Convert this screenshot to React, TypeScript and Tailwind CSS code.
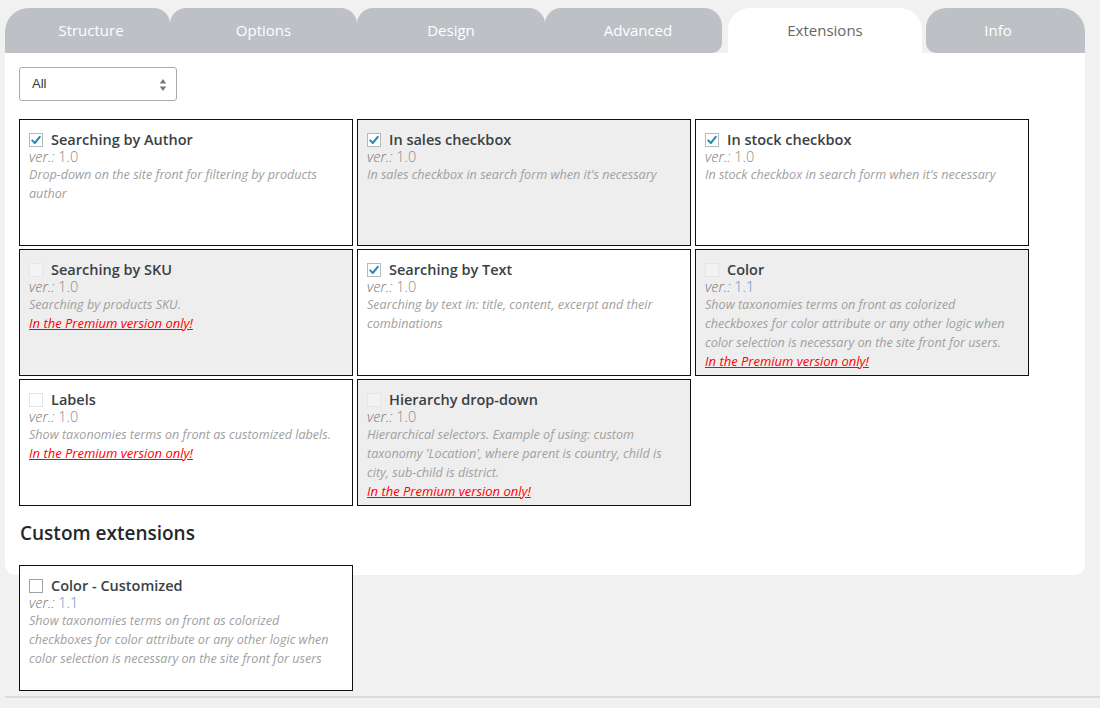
import React from "react";

type Ext = {
  title: string;
  ver: string;
  desc: string;
  checked?: boolean;
  premium?: boolean;
  gray?: boolean;
};

const exts: Ext[] = [
  { title: "Searching by Author", ver: "1.0", desc: "Drop-down on the site front for filtering by products author", checked: true },
  { title: "In sales checkbox", ver: "1.0", desc: "In sales checkbox in search form when it's necessary", checked: true, gray: true },
  { title: "In stock checkbox", ver: "1.0", desc: "In stock checkbox in search form when it's necessary", checked: true },
  { title: "Searching by SKU", ver: "1.0", desc: "Searching by products SKU.", premium: true, gray: true },
  { title: "Searching by Text", ver: "1.0", desc: "Searching by text in: title, content, excerpt and their combinations", checked: true },
  { title: "Color", ver: "1.1", desc: "Show taxonomies terms on front as colorized checkboxes for color attribute or any other logic when color selection is necessary on the site front for users.", premium: true, gray: true },
  { title: "Labels", ver: "1.0", desc: "Show taxonomies terms on front as customized labels.", premium: true },
  { title: "Hierarchy drop-down", ver: "1.0", desc: "Hierarchical selectors. Example of using: custom taxonomy 'Location', where parent is country, child is city, sub-child is district.", premium: true, gray: true },
];

const font = { fontFamily: '"Open Sans", "Noto Sans", sans-serif' };

function Check({ checked, premium, gray }: { checked?: boolean; premium?: boolean; gray?: boolean }) {
  if (premium) {
    return (
      <span
        className={
          "inline-block w-[14px] h-[14px] shrink-0 border " +
          (gray ? "bg-[#f3f3f3] border-[#e6e6e6]" : "bg-white border-[#e3e3e3]")
        }
      />
    );
  }
  return (
    <span className="relative inline-block w-[14px] h-[14px] shrink-0 border border-[#b4b9be] bg-white">
      {checked && (
        <svg viewBox="0 0 14 14" className="absolute left-[-1px] top-[-1px] w-[14px] h-[14px]">
          <path d="M3.2 7.4 L5.8 10 L10.8 3.8" fill="none" stroke="#1e8cbe" strokeWidth="2" strokeLinecap="round" strokeLinejoin="round" />
        </svg>
      )}
    </span>
  );
}

function Body({ title, ver, desc, premium, box }: { title: string; ver: string; desc: string; premium?: boolean; box: React.ReactNode }) {
  return (
    <>
      <div className="flex items-center gap-[8px] h-[21px]">
        {box}
        <span className="text-[14.5px] font-semibold text-[#3a3f44] leading-[21px]">{title}</span>
      </div>
      <div className="h-[15px] leading-[14px] text-[14.5px]">
        <span className="italic font-light text-[#777]">ver.:</span>{" "}
        <span className={"font-light " + (ver === "1.1" ? "text-[#5b95d0]" : "text-[#8a8a8a]")}>{ver}</span>
      </div>
      <div className="text-[12.6px] italic leading-[19px] text-[#a0a0a0]">{desc}</div>
      {premium && (
        <div className="text-[13px] italic leading-[19px] text-[#ff0000] underline">
          In the Premium version only!
        </div>
      )}
    </>
  );
}

function Card({ e }: { e: Ext }) {
  return (
    <div
      className={
        "h-[127px] border border-[#111] px-[9px] pt-[9px] " + (e.gray ? "bg-[#eeeeee]" : "bg-white")
      }
    >
      <Body
        title={e.title}
        ver={e.ver}
        desc={e.desc}
        premium={e.premium}
        box={<Check checked={e.checked} premium={e.premium} gray={e.gray} />}
      />
    </div>
  );
}

function Tab({ label, cls, active }: { label: string; cls: string; active?: boolean }) {
  return (
    <div
      className={
        "h-[45px] flex items-center justify-center text-[15px] " +
        (active ? "bg-white text-[#666]" : "bg-[#bdc1c6] text-white") +
        " " +
        cls
      }
    >
      {label}
    </div>
  );
}

export default function App() {
  return (
    <div className="min-h-[708px] bg-[#f1f1f1] pt-[8px]" style={font}>
      <div className="flex ml-[5px] w-[1080px]">
        <Tab label="Structure" cls="w-[165px] rounded-tl-[24px] rounded-tr-[16px] pl-[7px]" />
        <Tab label="Options" cls="w-[187px] rounded-t-[16px]" />
        <Tab label="Design" cls="w-[188px] rounded-t-[16px]" />
        <Tab label="Advanced" cls="w-[177px] rounded-tl-[16px] rounded-tr-[18px] rounded-br-[10px] pl-[9px]" />
        <Tab label="Extensions" active cls="w-[194px] ml-[6px] rounded-t-[22px]" />
        <Tab label="Info" cls="w-[159px] ml-[4px] rounded-tl-[20px] rounded-tr-[24px] rounded-bl-[10px] pr-[15px]" />
      </div>
      <div className="ml-[5px] w-[1080px] h-[522px] bg-white rounded-b-[10px] px-[14px] pt-[14px]">
        <div
          className="relative w-[158px] h-[34px] border border-[#a7aaad] rounded-[3px] bg-white flex items-center pl-[12px] text-[13px] text-[#32373c]"
          style={{ fontFamily: '"Liberation Sans", Arial, sans-serif' }}
        >
          All
          <svg viewBox="0 0 8 14" className="absolute right-[9px] top-[10px] w-[8px] h-[14px]">
            <path d="M4 1 L7.2 5.6 L0.8 5.6 Z" fill="#777" />
            <path d="M4 13 L7.2 8.4 L0.8 8.4 Z" fill="#777" />
          </svg>
        </div>
        <div className="mt-[18px] grid grid-cols-[334px_334px_334px] gap-x-[4px] gap-y-[3px]">
          {exts.map((e) => (
            <Card key={e.title} e={e} />
          ))}
        </div>
        <div className="mt-[14px] h-[26px] leading-[26px] text-[19px] font-semibold text-[#23282d] pl-[1px]">
          Custom extensions
        </div>
        <div className="mt-[19px] w-[334px]">
          <div className="h-[126px] border border-[#111] bg-white px-[9px] pt-[9px]">
            <Body
              title="Color - Customized"
              ver="1.1"
              desc="Show taxonomies terms on front as colorized checkboxes for color attribute or any other logic when color selection is necessary on the site front for users"
              box={<span className="inline-block w-[14px] h-[14px] shrink-0 border border-[#a0a0a0] bg-white" />}
            />
          </div>
        </div>
      </div>
      <div className="ml-[5px] mt-[121px] h-[2px] bg-[#dcdcde]" />
    </div>
  );
}
